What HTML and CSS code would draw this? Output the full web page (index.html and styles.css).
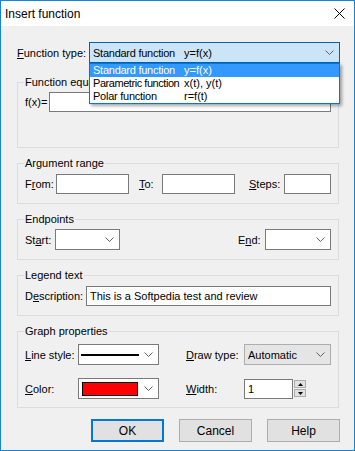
FILE: index.html
```html
<!DOCTYPE html>
<html lang="en">

<head>
    <meta charset="UTF-8">
    <title>Insert function</title>
    <link rel="stylesheet" href="styles.css">
</head>

<body>
    <div class="window">
        <div class="titlebar">
            <span class="title">Insert function</span>
            <svg class="close" width="11" height="11" viewBox="0 0 11 11">
                <path d="M0.5 0.5 L10.5 10.5 M10.5 0.5 L0.5 10.5" stroke="#000" stroke-width="1" fill="none" />
            </svg>
        </div>

        <div class="content">
            <!-- Function type -->
            <div class="type-row">
                <label class="type-label"><u>F</u>unction type:</label>
                <div class="combo combo-focus">
                    <span class="value"><span class="col">Standard function</span>y=f(x)</span>
                    <svg class="chevron" width="9" height="5" viewBox="0 0 9 5">
                        <polyline points="0.5,0.5 4.5,4.5 8.5,0.5" stroke="#606060" fill="none" />
                    </svg>
                    <ul class="droplist">
                        <li class="selected"><span class="col">Standard function</span>y=f(x)</li>
                        <li><span class="col col-tight">Parametric function</span>x(t), y(t)</li>
                        <li><span class="col">Polar function</span>r=f(t)</li>
                    </ul>
                </div>
            </div>

            <!-- Function equation -->
            <fieldset class="group group-equation">
                <legend>Function equation</legend>
                <div class="row">
                    <label class="lbl-fx">f(x)=</label>
                    <div class="edit grow"></div>
                </div>
            </fieldset>

            <!-- Argument range -->
            <fieldset class="group group-range">
                <legend>Argument range</legend>
                <div class="row">
                    <label class="lbl-from">F<u>r</u>om:</label>
                    <div class="edit w73"></div>
                    <label class="lbl-to"><u>T</u>o:</label>
                    <div class="edit w73"></div>
                    <label class="lbl-steps"><u>S</u>teps:</label>
                    <div class="edit grow"></div>
                </div>
            </fieldset>

            <!-- Endpoints -->
            <fieldset class="group group-ends">
                <legend>Endpoints</legend>
                <div class="row spread">
                    <div class="pair">
                        <label class="lbl-start">St<u>a</u>rt:</label>
                        <div class="combo combo-white w65">
                            <svg class="chevron" width="9" height="5" viewBox="0 0 9 5">
                                <polyline points="0.5,0.5 4.5,4.5 8.5,0.5" stroke="#606060" fill="none" />
                            </svg>
                        </div>
                    </div>
                    <div class="pair">
                        <label class="lbl-end">E<u>n</u>d:</label>
                        <div class="combo combo-white w66">
                            <svg class="chevron" width="9" height="5" viewBox="0 0 9 5">
                                <polyline points="0.5,0.5 4.5,4.5 8.5,0.5" stroke="#606060" fill="none" />
                            </svg>
                        </div>
                    </div>
                </div>
            </fieldset>

            <!-- Legend text -->
            <fieldset class="group group-legend">
                <legend>Legend text</legend>
                <div class="row">
                    <label class="lbl-desc">D<u>e</u>scription:</label>
                    <div class="edit grow">This is a Softpedia test and review</div>
                </div>
            </fieldset>

            <!-- Graph properties -->
            <fieldset class="group group-graph">
                <legend>Graph properties</legend>
                <div class="graph-grid">
                    <label><u>L</u>ine style:</label>
                    <div class="combo combo-white">
                        <span class="line-sample"></span>
                        <svg class="chevron" width="9" height="5" viewBox="0 0 9 5">
                            <polyline points="0.5,0.5 4.5,4.5 8.5,0.5" stroke="#606060" fill="none" />
                        </svg>
                    </div>
                    <span></span>
                    <label><u>D</u>raw type:</label>
                    <div class="combo combo-gray">
                        <span class="value">Automatic</span>
                        <svg class="chevron" width="9" height="5" viewBox="0 0 9 5">
                            <polyline points="0.5,0.5 4.5,4.5 8.5,0.5" stroke="#606060" fill="none" />
                        </svg>
                    </div>

                    <label><u>C</u>olor:</label>
                    <div class="combo combo-white">
                        <span class="swatch"></span>
                        <svg class="chevron" width="9" height="5" viewBox="0 0 9 5">
                            <polyline points="0.5,0.5 4.5,4.5 8.5,0.5" stroke="#606060" fill="none" />
                        </svg>
                    </div>
                    <span></span>
                    <label><u>W</u>idth:</label>
                    <div class="spin-field">
                        <div class="edit w49">1</div>
                        <div class="spin">
                            <div class="spin-btn">
                                <svg width="5" height="3" viewBox="0 0 5 3"><polygon points="0,3 2.5,0 5,3" fill="#000" /></svg>
                            </div>
                            <div class="spin-btn">
                                <svg width="5" height="3" viewBox="0 0 5 3"><polygon points="0,0 5,0 2.5,3" fill="#000" /></svg>
                            </div>
                        </div>
                    </div>
                </div>
            </fieldset>

            <!-- Buttons -->
            <div class="buttons">
                <button class="btn btn-default">OK</button>
                <button class="btn">Cancel</button>
                <button class="btn">Help</button>
            </div>
        </div>
    </div>
</body>

</html>
```

FILE: styles.css
```css
body {
    margin: 0;
    font-family: "Liberation Sans", Arial, sans-serif;
    font-size: 11px;
    color: #000;
    background: #f0f0f0;
}

.window {
    width: 355px;
    height: 451px;
    box-sizing: border-box;
    border: 1px solid #1883d7;
    background: #f0f0f0;
}

.titlebar {
    height: 25px;
    background: #fff;
    display: flex;
    align-items: center;
}

.title {
    font-size: 12px;
    padding-left: 4px;
}

.close {
    margin-left: auto;
    margin-right: 9px;
}

.content {
    padding: 16px 14px 0 16px;
}

label {
    white-space: nowrap;
}

/* function type row */
.type-row {
    display: flex;
    align-items: center;
    height: 21px;
}

.type-label {
    width: 72px;
}

.combo {
    position: relative;
    box-sizing: border-box;
    height: 21px;
    display: flex;
    align-items: center;
    border: 1px solid #7a7a7a;
    background: #fff;
}

.combo .chevron {
    margin-left: auto;
    margin-right: 5px;
}

.combo .value {
    padding-left: 3px;
    white-space: nowrap;
}

.combo-focus {
    width: 251px;
    background: #cce4f7;
    border-color: #0063b1;
}

.combo-gray {
    background: #e5e5e5;
    border-color: #adadad;
}

.col {
    display: inline-block;
    width: 91px;
    letter-spacing: -0.25px;
    overflow: hidden;
    vertical-align: top;
}

.col-tight {
    letter-spacing: -0.45px;
}

.droplist {
    position: absolute;
    top: 20px;
    left: -1px;
    width: 251px;
    box-sizing: border-box;
    margin: 0;
    padding: 0;
    list-style: none;
    background: #fff;
    border: 1px solid #0078d7;
    box-shadow: 2px 2px 3px rgba(0, 0, 0, 0.35);
    z-index: 2;
}

.droplist li {
    height: 13px;
    line-height: 13px;
    padding-left: 3px;
    white-space: nowrap;
}

.droplist li.selected {
    background: #3399ff;
    color: #fff;
}

/* group boxes */
.group {
    margin: 9px 1px 0 0;
    padding: 0 7px 9px;
    border: 1px solid #dcdcdc;
    min-width: 0;
}

.group legend {
    padding: 0 1px;
    margin-left: -1px;
    line-height: 13px;
}

.group-equation {
    margin-top: 13px;
    padding-bottom: 35px;
}

.row {
    display: flex;
    align-items: center;
    margin-top: 4px;
}

.group-equation .row,
.group-ends .row {
    margin-top: 3px;
}

.spread {
    justify-content: space-between;
}

.pair {
    display: flex;
    align-items: center;
}

.edit {
    box-sizing: border-box;
    height: 20px;
    line-height: 18px;
    padding-left: 3px;
    border: 1px solid #7a7a7a;
    background: #fff;
    white-space: nowrap;
}

.grow {
    flex: 1;
}

.w73 {
    width: 73px;
}

.w65 {
    width: 65px;
}

.w66 {
    width: 66px;
}

.w49 {
    width: 49px;
}

.lbl-fx {
    width: 24px;
}

.lbl-from {
    width: 31px;
}

.lbl-to {
    width: 23px;
    margin-left: 10px;
}

.lbl-steps {
    width: 35px;
    margin-left: 14px;
}

.lbl-start {
    width: 30px;
}

.lbl-end {
    width: 27px;
}

.lbl-desc {
    width: 61px;
}

/* graph properties */
.group-graph {
    padding-bottom: 8px;
}

.graph-grid {
    display: grid;
    grid-template-columns: 53px 81px 27px 58px 87px;
    grid-auto-rows: 21px;
    row-gap: 13px;
    align-items: center;
    margin-top: 6px;
}

.line-sample {
    width: 58px;
    height: 2px;
    margin-left: 2px;
    background: #000;
}

.swatch {
    box-sizing: border-box;
    width: 56px;
    height: 14px;
    margin-left: 3px;
    background: #ff0000;
    border: 1px solid #000;
}

.spin-field {
    display: flex;
    align-items: center;
}

.spin {
    display: flex;
    flex-direction: column;
    gap: 1px;
    margin-left: 1px;
}

.spin-btn {
    box-sizing: border-box;
    width: 12px;
    height: 8px;
    display: flex;
    align-items: center;
    justify-content: center;
    background: #e1e1e1;
    border: 1px solid #adadad;
}

/* dialog buttons */
.buttons {
    display: flex;
    justify-content: flex-end;
    gap: 15px;
    margin-top: 11px;
}

.btn {
    box-sizing: border-box;
    width: 73px;
    height: 23px;
    font-family: inherit;
    font-size: 12px;
    color: #000;
    background: #e1e1e1;
    border: 1px solid #adadad;
    padding: 0;
}

.btn-default {
    border: 2px solid #0078d7;
}
```
